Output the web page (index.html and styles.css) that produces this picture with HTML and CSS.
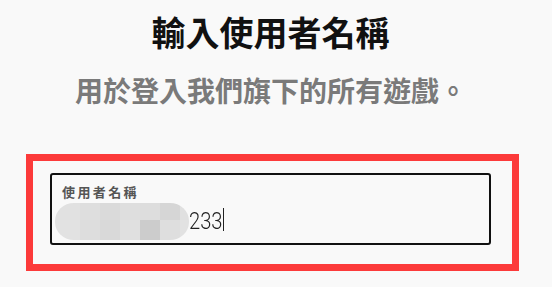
FILE: index.html
```html
<!DOCTYPE html>
<html lang="zh-Hant">
<head>
<meta charset="utf-8">
<title>輸入使用者名稱</title>
<link rel="stylesheet" href="styles.css">
</head>
<body>
<main class="page">
  <h1 class="title">輸入使用者名稱</h1>
  <p class="subtitle">用於登入我們旗下的所有遊戲。</p>
  <section class="highlight">
    <div class="field">
      <div class="field-label">使用者名稱</div>
      <div class="field-value">
        <div class="redacted" aria-hidden="true">
          <span></span><span></span><span></span><span></span><span></span><span></span><span></span>
          <span></span><span></span><span></span><span></span><span></span><span></span><span></span>
        </div>
        <span class="value-text">233</span><span class="caret"></span>
      </div>
    </div>
  </section>
</main>
</body>
</html>
```

FILE: styles.css
```css
html, body {
  margin: 0;
  padding: 0;
  background: #f9f9f9;
}

body {
  font-family: "Noto Sans CJK TC", "Noto Sans", sans-serif;
  width: 552px;
  height: 287px;
  overflow: hidden;
}

.page {
  padding: 0 33px 0 26px;
  display: flex;
  flex-direction: column;
}

.title {
  margin: 12px 0 0;
  font-size: 34px;
  line-height: 40px;
  font-weight: 700;
  color: #111;
  text-align: center;
  padding-right: 4px;
}

.subtitle {
  margin: 20px 0 0;
  font-size: 28px;
  line-height: 36px;
  font-weight: 700;
  color: #7a7a7a;
  text-align: center;
  padding-right: 3px;
}

.highlight {
  margin-top: 46px;
  border: 7px solid #fc3a3a;
  padding: 12px 21px 19px 17px;
}

.field {
  border: 2px solid #111;
  border-radius: 3px;
  padding: 9px 10px 0 10px;
  height: 59px;
}

.field-label {
  font-size: 13px;
  line-height: 16px;
  font-weight: 700;
  letter-spacing: 2.4px;
  color: #555;
}

.field-value {
  margin-top: 3px;
  display: flex;
  align-items: flex-start;
}

.redacted {
  margin-left: -7px;
  width: 134px;
  height: 37px;
  display: grid;
  grid-template-columns: 25px 20px 20px 20px 20px 20px 9px;
  grid-template-rows: 17px 20px;
  border-radius: 19px / 18px;
  overflow: hidden;
  filter: blur(0.4px);
}

.redacted span:nth-child(1) { background: #e1e1e1; }
.redacted span:nth-child(2) { background: #dedede; }
.redacted span:nth-child(3) { background: #dadada; }
.redacted span:nth-child(4) { background: #dedede; }
.redacted span:nth-child(5) { background: #dddddd; }
.redacted span:nth-child(6) { background: #d6d6d6; }
.redacted span:nth-child(7) { background: #e0e0e0; }
.redacted span:nth-child(8) { background: #e2e2e2; }
.redacted span:nth-child(9) { background: #dddddd; }
.redacted span:nth-child(10) { background: #d9d9d9; }
.redacted span:nth-child(11) { background: #e0e0e0; }
.redacted span:nth-child(12) { background: #cccccc; }
.redacted span:nth-child(13) { background: #dedede; }
.redacted span:nth-child(14) { background: #e2e2e2; }

.value-text {
  display: inline-block;
  font-family: Roboto, "Noto Sans", sans-serif;
  font-weight: 300;
  font-size: 24px;
  line-height: 28px;
  margin-top: 4px;
  width: 34px;
  transform: scaleX(0.84);
  transform-origin: left center;
  color: #222;
}

.caret {
  width: 1px;
  height: 23px;
  margin-top: 5px;
  background: #222;
}
```
